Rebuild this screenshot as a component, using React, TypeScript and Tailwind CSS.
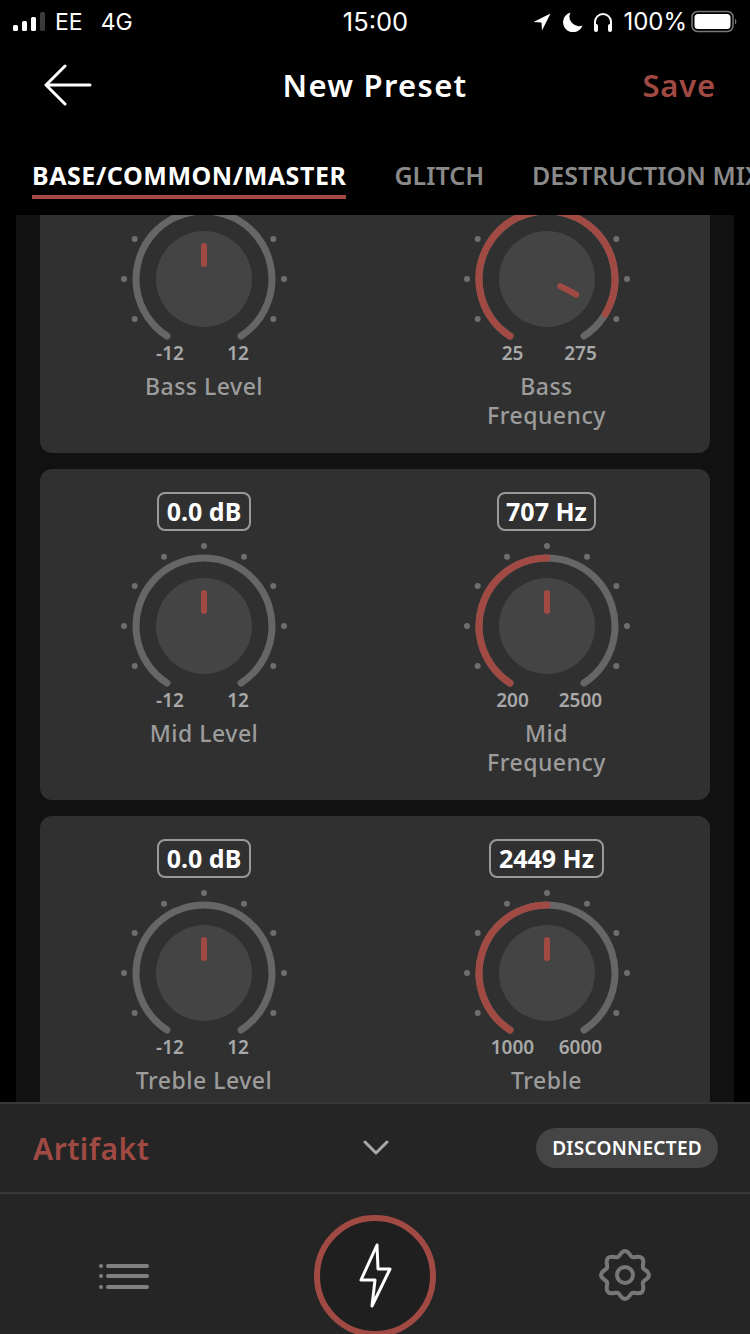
const RED = "#a04a43";
const GRAY = "#666666";

function polar(r: number, deg: number): [number, number] {
  const a = (deg * Math.PI) / 180;
  return [85 + r * Math.sin(a), 85 - r * Math.cos(a)];
}

function arc(from: number, to: number, r = 68) {
  const [x1, y1] = polar(r, from);
  const [x2, y2] = polar(r, to);
  return `M${x1} ${y1}A${r} ${r} 0 ${to - from > 180 ? 1 : 0} 1 ${x2} ${y2}`;
}

function Knob({ value, min, max, label, valueAt, pointer = 0 }: { value?: string; min: string; max: string; label: string[]; valueAt?: number; pointer?: number }) {
  const dots = [-120, -90, -60, -30, 0, 30, 60, 90, 120];
  const [px1, py1] = polar(15, pointer);
  const [px2, py2] = polar(33, pointer);
  return (
    <div className="flex flex-col items-center">
      <div className="h-[39px] rounded-[8px] border-2 border-[#999999] px-[7.5px] text-[25px] leading-[35px] font-bold text-white">{value}</div>
      <svg width="170" height="150" viewBox="0 0 170 150" className="mt-[10px]">
        {dots.map((d) => {
          const [x, y] = polar(80, d);
          return <circle key={d} cx={x} cy={y} r="3" fill="#6e6e6e" />;
        })}
        <path d={arc(-147, 147)} fill="none" stroke={GRAY} strokeWidth="7" strokeLinecap="round" />
        {valueAt !== undefined && <path d={arc(-147, valueAt)} fill="none" stroke={RED} strokeWidth="7" strokeLinecap="round" />}
        <circle cx="85" cy="85" r="48" fill="#444444" />
        <path d={`M${px1} ${py1}L${px2} ${py2}`} stroke={RED} strokeWidth="6" strokeLinecap="round" />
      </svg>
      <div className="grid w-[136px] grid-cols-2 text-center text-[19px] leading-[18px] font-semibold text-[#a8a8a8]">
        <span>{min}</span>
        <span>{max}</span>
      </div>
      <div className="mt-[10px] text-center text-[23px] leading-[29px] font-medium tracking-[0.5px] text-[#9c9c9c]">
        {label.map((l) => (
          <div key={l}>{l}</div>
        ))}
      </div>
    </div>
  );
}

function Card({ children }: { children: React.ReactNode }) {
  return <div className="flex shrink-0 gap-[15px] rounded-[12px] bg-[#303030] pt-[23px] pb-[23px]">{children}</div>;
}

export default function App() {
  return (
    <div className="flex h-[1334px] w-[750px] flex-col overflow-hidden bg-black font-['Noto_Sans',sans-serif]">
      <header className="shrink-0 bg-black">
        <div className="flex h-[44px] items-center justify-between pr-[12px] pl-[13px] font-['Inter',sans-serif] text-[24px] font-normal text-white">
          <div className="flex w-[220px] items-center">
            <svg width="36" height="20" viewBox="0 0 36 20">
              <rect x="0" y="13" width="5" height="6" rx="1.5" fill="#fff" />
              <rect x="9" y="9" width="5" height="10" rx="1.5" fill="#fff" />
              <rect x="18" y="5" width="5" height="14" rx="1.5" fill="#fff" />
              <rect x="27" y="0" width="5" height="19" rx="1.5" fill="#3a3a3a" />
            </svg>
            <span className="ml-[6px] text-[23px]">EE</span>
            <span className="ml-[18px] text-[23px]">4G</span>
          </div>
          <span className="text-[25.5px]">15:00</span>
          <div className="flex w-[220px] items-center justify-end gap-[8px]">
            <svg width="18" height="18" viewBox="0 0 18 18">
              <path d="M17.5 0.5L0.5 9L8.5 9.5L9 17.5Z" fill="#fff" />
            </svg>
            <svg width="20" height="20" viewBox="0 0 20 20" className="ml-[4px]">
              <path d="M7.5 0.5A10 10 0 1 0 19.5 13.5A9.5 9.5 0 0 1 7.5 0.5Z" fill="#fff" />
            </svg>
            <svg width="20" height="20" viewBox="0 0 20 20" className="ml-[2px]">
              <path d="M2 13V10A8 8 0 0 1 18 10V13" fill="none" stroke="#fff" strokeWidth="2" />
              <rect x="1" y="12" width="4" height="8" rx="2" fill="#fff" />
              <rect x="15" y="12" width="4" height="8" rx="2" fill="#fff" />
            </svg>
            <span className="ml-[2px] text-[24px]">100%</span>
            <svg width="47" height="24" viewBox="0 0 47 24" className="-ml-[4px]">
              <rect x="1" y="1.5" width="41" height="20" rx="5.5" fill="none" stroke="#777" strokeWidth="1.5" />
              <rect x="3.5" y="4" width="36" height="15" rx="3.5" fill="#fff" />
              <path d="M44 8.5A4 4 0 0 1 44 14.5Z" fill="#777" />
            </svg>
          </div>
        </div>
        <div className="grid h-[84px] grid-cols-[1fr_auto_1fr] items-center pr-[34px] pb-[2px] pl-[44px]">
          <svg width="48" height="42" viewBox="0 0 48 42" fill="none" stroke="#fff" strokeWidth="3" strokeLinecap="round" strokeLinejoin="round">
            <path d="M46 21H3M21 2L2 21L21 40" />
          </svg>
          <span className="pr-[10px] text-[31px] leading-[40px] font-semibold tracking-[1.3px] text-white">New Preset</span>
          <span className="text-right text-[31px] leading-[40px] font-semibold tracking-[0.8px] text-[#a04a43]">Save</span>
        </div>
        <div className="flex h-[87px] gap-[48px] overflow-hidden pl-[32px] text-[25px] font-semibold whitespace-nowrap">
          <div className="h-[71px] border-b-4 border-[#a04a43] pt-[30px] leading-[34px] font-bold tracking-[0.55px] text-white">BASE/COMMON/MASTER</div>
          <div className="pt-[30px] leading-[34px] text-[#8a8a8a]">GLITCH</div>
          <div className="pt-[30px] leading-[34px] text-[#8a8a8a]">DESTRUCTION MIX</div>
        </div>
      </header>

      <main className="min-h-0 flex-1 overflow-hidden bg-black px-[16px]">
        <div className="h-full overflow-hidden bg-[#111111] px-[24px]">
          <div className="-mt-[93px] flex flex-col gap-[16px]">
            <Card>
              <div className="w-[328px]"><Knob value="" min="-12" max="12" label={["Bass Level"]} /></div>
              <div className="w-[327px]"><Knob value="" min="25" max="275" label={["Bass", "Frequency"]} valueAt={121} pointer={118} /></div>
            </Card>
            <Card>
              <div className="w-[328px]"><Knob value="0.0 dB" min="-12" max="12" label={["Mid Level"]} /></div>
              <div className="w-[327px]"><Knob value="707 Hz" min="200" max="2500" label={["Mid", "Frequency"]} valueAt={0} /></div>
            </Card>
            <Card>
              <div className="w-[328px]"><Knob value="0.0 dB" min="-12" max="12" label={["Treble Level"]} /></div>
              <div className="w-[327px]"><Knob value="2449 Hz" min="1000" max="6000" label={["Treble"]} valueAt={0} /></div>
            </Card>
          </div>
        </div>
      </main>

      <footer className="shrink-0 overflow-hidden border-t-2 border-[#383838] bg-[#252525]">
        <div className="flex h-[88px] items-center justify-between pr-[32px] pl-[33px]">
          <span className="w-[200px] text-[30px] font-semibold tracking-[0.5px] text-[#a04a43]">Artifakt</span>
          <svg width="26" height="16" viewBox="0 0 26 16" fill="none" stroke="#a8a8a8" strokeWidth="3" strokeLinecap="round" strokeLinejoin="round">
            <path d="M2 2L13 13L24 2" />
          </svg>
          <div className="flex w-[200px] justify-end">
            <div className="flex h-[40px] items-center rounded-full bg-[#454545] px-[16px] text-[19px] font-semibold tracking-[0.3px] text-white">DISCONNECTED</div>
          </div>
        </div>
        <div className="flex h-[142px] items-start justify-between border-t-2 border-[#383838] pt-[21px] pr-[99px] pl-[98px]">
          <svg width="52" height="28" viewBox="0 0 52 28" className="mt-[47px]" fill="#808080">
            <circle cx="3" cy="4" r="2" />
            <circle cx="3" cy="14" r="2" />
            <circle cx="3" cy="25" r="2" />
            <rect x="8" y="2" width="43" height="4" rx="2" />
            <rect x="8" y="12" width="43" height="4" rx="2" />
            <rect x="8" y="23" width="43" height="4" rx="2" />
          </svg>
          <div className="flex h-[122px] w-[122px] shrink-0 items-center justify-center rounded-full border-[6px] border-[#a04a43] bg-[#1f1f1f]">
            <svg width="36" height="66" viewBox="0 0 36 66" fill="none" stroke="#fff" strokeWidth="3" strokeLinejoin="round">
              <path d="M20 2L4 37H18L15 63L33 26H21Z" />
            </svg>
          </div>
          <svg width="52" height="52" viewBox="0 0 52 52" className="mt-[34px]" fill="none" stroke="#777" strokeWidth="4">
            <circle cx="26" cy="26" r="8" />
            <path d="M26 2C30 2 31 7 33 8C35 9 40 6 43 9C46 12 43 16 44 19C45 21 50 22 50 26C50 30 45 31 44 33C43 36 46 40 43 43C40 46 36 43 33 44C31 45 30 50 26 50C22 50 21 45 19 44C16 43 12 46 9 43C6 40 9 36 8 33C7 31 2 30 2 26C2 22 7 21 8 19C9 16 6 12 9 9C12 6 16 9 19 8C21 7 22 2 26 2Z" />
          </svg>
        </div>
      </footer>
    </div>
  );
}
